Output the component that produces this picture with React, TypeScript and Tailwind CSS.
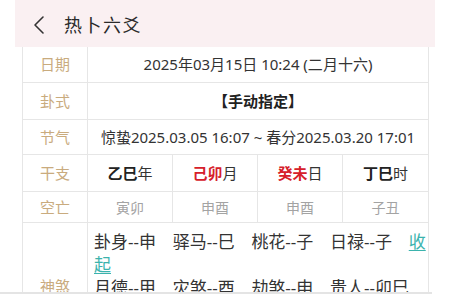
import React from 'react';

/**
 * 排盘详情 (热卜六爻)。
 * 上部: 日期 / 卦式 / 节气 / 干支 / 空亡 / 神煞 の表。
 */

const FONT = { fontFamily: '"Noto Sans", "Noto Sans CJK SC", sans-serif' };

const shenshaTop = ['卦身--申', '驿马--巳', '桃花--子', '日禄--子'];
const shenshaRest = [
  '月德--甲',
  '灾煞--酉',
  '劫煞--申',
  '贵人--卯巳',
  '天喜--戌',
  '咸池--子',
  '将星--酉',
  '华盖--丑',
  '天医--寅',
  '文昌--申',
  '羊刃--午',
  '谋星--未',
];

function Label({ children }: { children: React.ReactNode }) {
  return (
    <div className="flex items-center justify-center border-r border-[#e6e6e6] text-[15px] text-[#c9ab7e]">
      {children}
    </div>
  );
}

function Row({
  label,
  h,
  children,
}: {
  label: string;
  h: string;
  children: React.ReactNode;
}) {
  return (
    <div className={`grid grid-cols-[65px_1fr] border-b border-[#e6e6e6] ${h}`}>
      <Label>{label}</Label>
      {children}
    </div>
  );
}

function GanZhi({ stem, unit, red }: { stem: string; unit: string; red?: boolean }) {
  return (
    <div className="flex items-center justify-center border-r border-[#e6e6e6] last:border-r-0 text-[15px]">
      <span className={red ? 'font-bold text-[#d6202a]' : 'font-bold text-[#222]'}>{stem}</span>
      <span className="text-[#333]">{unit}</span>
    </div>
  );
}

function Empty({ text }: { text: string }) {
  return (
    <div className="flex items-center justify-center border-r border-[#e6e6e6] last:border-r-0 text-[14px] text-[#a3a3a3]">
      {text}
    </div>
  );
}

function Item({ text }: { text: string }) {
  return <span className="w-[78.7px] shrink-0 whitespace-nowrap">{text}</span>;
}

export default function App() {
  return (
    <div className="flex h-[294px] w-[450px] flex-col overflow-hidden bg-white" style={FONT}>
      <div className="flex-1 overflow-hidden">
        {/* ヘッダー */}
        <div className="ml-[15px] flex h-[47px] w-[420px] items-center bg-[#faf0f2] pt-[3px]">
          <svg
            className="ml-[18px] h-[20px] w-[12px]"
            viewBox="0 0 12 20"
            fill="none"
            stroke="#333"
            strokeWidth="1.6"
            strokeLinecap="round"
            strokeLinejoin="round"
          >
            <path d="M10 2 L2 10 L10 18" />
          </svg>
          <span className="ml-[19px] text-[18px] tracking-[1.5px] text-[#2a2a2a]">热卜六爻</span>
        </div>

        {/* 表 */}
        <div className="ml-[22px] w-[407px] border-x border-[#e6e6e6] text-[#333]">
          <Row label="日期" h="h-[36px]">
            <div className="flex items-center justify-center text-[15px]">
              2025年03月15日 10:24 (二月十六)
            </div>
          </Row>
          <Row label="卦式" h="h-[37px]">
            <div className="flex items-center justify-center text-[15px] font-bold text-[#222]">
              【手动指定】
            </div>
          </Row>
          <Row label="节气" h="h-[35px]">
            <div className="flex items-center justify-center text-[15px]">
              惊蛰2025.03.05 16:07 ~ 春分2025.03.20 17:01
            </div>
          </Row>
          <Row label="干支" h="h-[37px]">
            <div className="grid grid-cols-4">
              <GanZhi stem="乙巳" unit="年" />
              <GanZhi stem="己卯" unit="月" red />
              <GanZhi stem="癸未" unit="日" red />
              <GanZhi stem="丁巳" unit="时" />
            </div>
          </Row>
          <Row label="空亡" h="h-[31px]">
            <div className="grid grid-cols-4">
              <Empty text="寅卯" />
              <Empty text="申酉" />
              <Empty text="申酉" />
              <Empty text="子丑" />
            </div>
          </Row>
          <Row label="神煞" h="h-[128px]">
            <div className="pl-[6px] pt-[7px] text-[17px] leading-[23px]">
              <div className="flex">
                {shenshaTop.map((s) => (
                  <Item key={s} text={s} />
                ))}
                <span className="text-[#3bb3ad] underline underline-offset-2">收</span>
              </div>
              <div>
                <span className="text-[#3bb3ad] underline underline-offset-2">起</span>
              </div>
              <div className="flex flex-wrap">
                {shenshaRest.map((s) => (
                  <Item key={s} text={s} />
                ))}
              </div>
            </div>
          </Row>
        </div>
      </div>
      <div className="h-[2px] w-[432px] bg-[#e4e4e4]" />
    </div>
  );
}
